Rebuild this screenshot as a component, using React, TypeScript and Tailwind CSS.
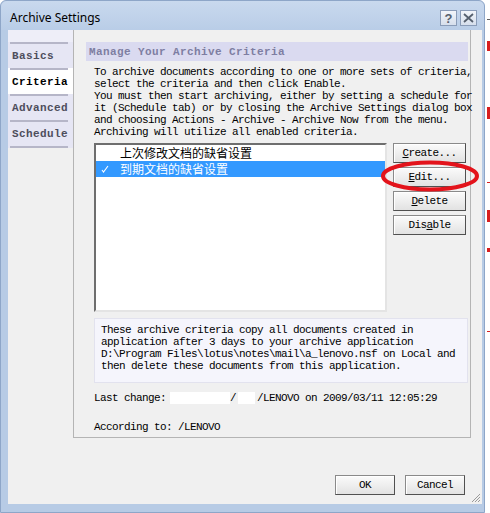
const mono = "font-['Liberation_Mono','Noto_Sans_CJK_SC',monospace] text-[11px] tracking-[-0.6px] leading-[12px]";
const monoBold = "font-['Liberation_Mono',monospace] text-[11px] font-bold tracking-[0.4px] leading-[12px]";

function TabItem({ label, active }: { label: string; active?: boolean }) {
  return (
    <div className={`h-[24px] flex items-center pl-[4px] ${monoBold} ${active ? 'bg-white text-black' : 'bg-[#e6e6f4] text-[#4e4e5c]'}`}>
      {label}
    </div>
  );
}

function Sep() {
  return <div className="h-[2px] bg-[#b6b6c8] ml-[2px] mr-[5px]" />;
}

function Btn({ children, w = 'w-[73px]' }: { children: React.ReactNode; w?: string }) {
  return (
    <button
      className={`${w} h-[20px] flex items-center justify-center border border-[#8a8a8a] border-r-[#505050] border-b-[#505050] bg-gradient-to-b from-[#fbfbfb] to-[#e2e2e2] shadow-[inset_1px_1px_0_#ffffff] text-black ${mono}`}
    >
      {children}
    </button>
  );
}

function TitleBtn({ children }: { children: React.ReactNode }) {
  return (
    <div className="w-[17px] h-[16px] flex items-center justify-center border border-[#8a9cb8] bg-gradient-to-b from-[#f2f5fa] to-[#d6dfec] text-[#56606e]">
      {children}
    </div>
  );
}

export default function App() {
  return (
    <div className="relative w-[490px] h-[513px] bg-white overflow-hidden">
      <div className="w-[485px] h-[513px] flex flex-col bg-[#b7cbe5] border border-[#8ea6c8] rounded-t-[6px]">
        {/* Title bar */}
        <div className="h-[29px] flex items-center pt-[5px] pl-[9px] pr-[7px] bg-gradient-to-b from-[#c9d9ee] to-[#b9cde7] rounded-t-[6px]">
          <span className="font-['Noto_Sans',sans-serif] text-[12px] text-black">Archive Settings</span>
          <div className="ml-auto flex gap-[3px]">
            <TitleBtn>
              <span className="font-['Liberation_Sans',sans-serif] text-[13px] font-bold leading-none">?</span>
            </TitleBtn>
            <TitleBtn>
              <svg width="11" height="10" viewBox="0 0 11 10">
                <path d="M1 1 L10 9 M10 1 L1 9" stroke="#56606e" strokeWidth="1.8" />
              </svg>
            </TitleBtn>
          </div>
        </div>

        {/* Client area */}
        <div className="relative flex-1 ml-[7px] mr-[2px] mb-[8px] bg-[#f0f0f0] flex flex-col">
          <div className="h-[408px] flex">
            {/* Left tabs */}
            <div className="w-[65px] flex flex-col">
              <div className="h-[12px] bg-[#eeeef8]" />
              <div className="bg-[#e6e6f4]">
                <Sep />
                <TabItem label="Basics" />
              </div>
              <div className="bg-white">
                <Sep />
                <TabItem label="Criteria" active />
              </div>
              <div className="bg-[#e6e6f4]">
                <Sep />
                <TabItem label="Advanced" />
              </div>
              <div className="bg-[#e6e6f4]">
                <Sep />
                <TabItem label="Schedule" />
                <Sep />
              </div>
            </div>

            {/* Main panel */}
            <div className="w-[398px] border-l border-r border-b border-[#b4b4b4] pt-[12px] pl-[12px] pr-[2px] flex flex-col">
              <div className={`h-[19px] flex items-center pl-[3px] bg-[#dadaf0] text-[#7e7ea2] ${monoBold}`}>
                Manage Your Archive Criteria
              </div>

              <div className="ml-[8px]">
                <div className={`mt-[5px] text-black whitespace-pre ${mono}`}>
                  <div>To archive documents according to one or more sets of criteria,</div>
                  <div>select the criteria and then click Enable.</div>
                  <div>You must then start archiving, either by setting a schedule for</div>
                  <div>it (Schedule tab) or by closing the Archive Settings dialog box</div>
                  <div>and choosing Actions - Archive - Archive Now from the menu.</div>
                  <div>Archiving will utilize all enabled criteria.</div>
                </div>

                <div className="mt-[5px] flex">
                  <div className="w-[293px] h-[169px] bg-white border-2 border-t-[#6e6e6e] border-l-[#6e6e6e] border-r-[#e4e4e4] border-b-[#e4e4e4]">
                    <div className="h-[16px] flex items-center pl-[24px] font-['Noto_Sans_CJK_SC',sans-serif] text-[12px] text-black">
                      上次修改文档的缺省设置
                    </div>
                    <div className="h-[16px] flex items-center bg-[#3399ff] font-['Noto_Sans_CJK_SC',sans-serif] text-[12px] text-white">
                      <svg className="ml-[5px] mr-[11px]" width="8" height="8" viewBox="0 0 8 8">
                        <path d="M1 5 L2.5 7 L7 1" stroke="white" strokeWidth="1.1" fill="none" />
                      </svg>
                      到期文档的缺省设置
                    </div>
                  </div>
                  <div className="ml-[6px] flex flex-col gap-[4px]">
                    <Btn><span className="underline underline-offset-[1px]">C</span>reate...</Btn>
                    <Btn><span className="underline underline-offset-[1px]">E</span>dit...</Btn>
                    <Btn><span className="underline underline-offset-[1px]">D</span>elete</Btn>
                    <Btn>Dis<span className="underline underline-offset-[1px]">a</span>ble</Btn>
                  </div>
                </div>

                <div className={`mt-[6px] w-[374px] h-[65px] bg-[#f5f5fc] border border-[#e2e2ee] pl-[6px] pt-[5px] text-black whitespace-pre ${mono}`}>
                  <div>These archive criteria copy all documents created in</div>
                  <div>application after 3 days to your archive application</div>
                  <div>D:\Program Files\lotus\notes\mail\a_lenovo.nsf on Local and</div>
                  <div>then delete these documents from this application.</div>
                </div>

                <div className={`mt-[9px] flex items-center text-black whitespace-pre ${mono}`}>
                  <span>Last change:</span>
                  <span className="ml-[4px] w-[60px] h-[12px] bg-white" />
                  <span>/</span>
                  <span className="ml-[2px] w-[17px] h-[12px] bg-white" />
                  <span className="ml-[2px]">/LENOVO on 2009/03/11 12:05:29</span>
                </div>

                <div className={`mt-[17px] text-black whitespace-pre ${mono}`}>According to: /LENOVO</div>
              </div>
            </div>
          </div>

          {/* Bottom buttons */}
          <div className="flex-1 flex items-end justify-end gap-[10px] pr-[17px] pb-[9px]">
            <Btn w="w-[60px]">OK</Btn>
            <Btn w="w-[60px]">Cancel</Btn>
          </div>

          {/* size grip */}
          <svg className="absolute right-[1px] bottom-[1px]" width="12" height="12" viewBox="0 0 12 12">
            <path d="M11 3 L3 11 M11 6 L6 11 M11 9 L9 11" stroke="#9a9a9a" strokeWidth="1" />
          </svg>
        </div>
      </div>

      {/* red annotation around Edit */}
      <svg className="absolute left-[380px] top-[160px]" width="100" height="32" viewBox="0 0 100 32">
        <ellipse cx="50" cy="16" rx="47" ry="13.5" fill="none" stroke="#e3131b" strokeWidth="4" />
      </svg>

      {/* bits of the page behind the window */}
      <div className="absolute right-0 top-[19px] w-[3px] h-[1px] bg-[#606060]" />
      <div className="absolute right-0 top-[41px] w-[3px] h-[10px] bg-[#d81e1e]" />
      <div className="absolute right-0 top-[107px] w-[3px] h-[12px] bg-[#d81e1e]" />
      <div className="absolute right-0 top-[182px] w-[3px] h-[1px] bg-[#d81e1e]" />
      <div className="absolute right-0 top-[210px] w-[3px] h-[12px] bg-[#d81e1e]" />
      <div className="absolute right-0 top-[248px] w-[3px] h-[4px] bg-[#d81e1e]" />
      <div className="absolute right-0 top-[331px] w-[3px] h-[1px] bg-[#d81e1e]" />
    </div>
  );
}
